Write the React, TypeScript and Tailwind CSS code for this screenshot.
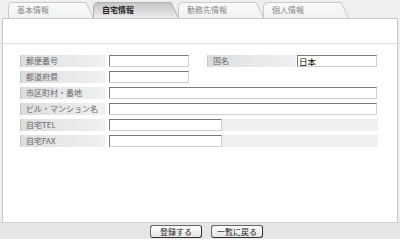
import * as React from 'react'

const tabs = [
  { label: '基本情報', active: false },
  { label: '自宅情報', active: true },
  { label: '勤務先情報', active: false },
  { label: '個人情報', active: false },
]

function Tab({ label, active, index }: { label: string; active: boolean; index: number }) {
  const id = `tabfill${index}`
  return (
    <div className="relative w-[86px] h-[16px] -mr-px">
      <svg className="absolute inset-0" width="86" height="16" viewBox="0 0 86 16">
        <defs>
          <linearGradient id={id} x1="0" y1="0" x2="0" y2="1">
            {active ? (
              <>
                <stop offset="0" stopColor="#c4c4c4" />
                <stop offset="1" stopColor="#ececec" />
              </>
            ) : (
              <>
                <stop offset="0" stopColor="#fafafa" />
                <stop offset="1" stopColor="#f1f1f1" />
              </>
            )}
          </linearGradient>
        </defs>
        <path
          d="M0.5 16 V5 Q0.5 0.5 5 0.5 H78 L85.5 16"
          fill={`url(#${id})`}
          stroke={active ? '#b0b0b0' : '#c8c8c8'}
          strokeWidth="1"
        />
      </svg>
      <span
        className={`relative block pl-[9px] pt-[2px] text-[8px] leading-[12px] ${
          active ? 'text-[#222] font-bold' : 'text-[#888]'
        }`}
      >
        {label}
      </span>
    </div>
  )
}

function Label({ children, w = 'w-[85px]' }: { children: React.ReactNode; w?: string }) {
  return (
    <div
      className={`${w} h-[12px] shrink-0 pl-[5px] text-[8px] leading-[12px] text-[#666] bg-gradient-to-r from-[#dcdcdc] via-[#e8e8e8] to-[#f0f0f0] border-l border-[#c8c8c8] whitespace-nowrap overflow-hidden`}
    >
      {children}
    </div>
  )
}

function Field({ w, value }: { w: string; value?: string }) {
  return (
    <div
      className={`${w} h-[12px] shrink-0 bg-white border-t border-l border-[#7a7a7a] border-r border-b border-r-[#d0d0d0] border-b-[#d0d0d0] text-[8.5px] leading-[10px] text-black pl-px`}
    >
      {value}
    </div>
  )
}

export default function App() {
  return (
    <div
      className="w-[400px] h-[239px] bg-[#efefef] flex flex-col overflow-hidden"
      style={{ fontFamily: '"Noto Sans CJK JP", "Noto Sans", sans-serif' }}
    >
      {/* Tabs */}
      <div className="h-[18px] flex items-end pl-[8px]">
        {tabs.map((t, i) => (
          <Tab key={t.label} label={t.label} active={t.active} index={i} />
        ))}
      </div>

      {/* Panel */}
      <div className="flex-1 mx-[2px] bg-white border-x border-t border-[#c8c8c8] flex flex-col">
        <div className="h-[25px] border-b border-[#dcdcdc]" />
        <div className="pt-[11px] pl-[17px] flex flex-col gap-[4px]">
          <div className="flex items-center">
            <Label>郵便番号</Label>
            <div className="w-[4px]" />
            <Field w="w-[80px]" />
            <div className="w-[18px]" />
            <Label w="w-[89px]">国名</Label>
            <div className="w-[1px]" />
            <Field w="w-[80px]" value="日本" />
          </div>
          <div className="flex items-center">
            <Label>都道府県</Label>
            <div className="w-[4px]" />
            <Field w="w-[80px]" />
          </div>
          <div className="flex items-center">
            <Label>市区町村・番地</Label>
            <div className="w-[4px]" />
            <Field w="w-[268px]" />
          </div>
          <div className="flex items-center">
            <Label>ビル・マンション名</Label>
            <div className="w-[4px]" />
            <Field w="w-[268px]" />
          </div>
          <div className="flex items-center w-[358px] bg-[#efefef]">
            <Label>自宅TEL</Label>
            <div className="w-[4px] h-[12px] bg-white" />
            <Field w="w-[113px]" />
          </div>
          <div className="flex items-center w-[358px] bg-[#efefef]">
            <Label>自宅FAX</Label>
            <div className="w-[4px] h-[12px] bg-white" />
            <Field w="w-[113px]" />
          </div>
        </div>
      </div>

      {/* Bottom bar */}
      <div className="h-[17px] bg-[#e6e6e6] border-t border-[#d0d0d0] flex items-center justify-center gap-[9px] pl-[13px]">
        <button className="w-[52px] h-[13px] rounded-[3px] bg-gradient-to-b from-white to-[#e4e4e4] border border-[#666] border-r-[#333] border-b-[#333] text-[8px] leading-[11px] text-[#222]">
          登録する
        </button>
        <button className="w-[52px] h-[13px] rounded-[3px] bg-gradient-to-b from-white to-[#e4e4e4] border border-[#666] border-r-[#333] border-b-[#333] text-[8px] leading-[11px] text-[#222]">
          一覧に戻る
        </button>
      </div>
    </div>
  )
}
